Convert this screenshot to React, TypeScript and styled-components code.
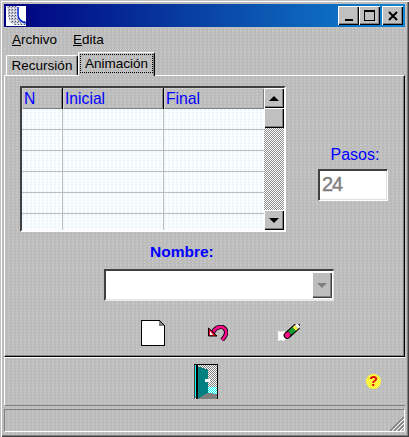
import React from 'react';
import styled, { createGlobalStyle, css } from 'styled-components'

const GlobalStyle = createGlobalStyle`
    html, body {
        margin: 0;
        padding: 0;
        background: #bdbdbd;
    }
`

const dots = css`
    background-color: #bbbbbb;
    background-image: radial-gradient(circle at 1px 1px, #c6c6c6 0.7px, transparent 0.8px);
    background-size: 4px 3px;
`

const Window = styled.div`
    ${dots}
    box-sizing: border-box;
    width: 409px;
    height: 437px;
    padding: 4px 4px 4px 4px;
    display: flex;
    flex-direction: column;
    overflow: hidden;
    font-family: "Liberation Sans", Arial, sans-serif;
    color: #000;
    box-shadow: inset 1px 1px 0 #c0c0c0, inset 2px 2px 0 #fff, inset -1px -1px 0 #404040, inset -2px -2px 0 #808080;
`

const TitleBar = styled.div`
    height: 23px;
    flex: none;
    padding: 0 2px;
    display: flex;
    align-items: center;
    background: linear-gradient(90deg, #000080 0%, #0a4aa8 55%, #1084d0 100%);
`

const TitleIcon = styled.svg`
    width: 20px;
    height: 20px;
    flex: none;
`

const TitleButtons = styled.div`
    margin-left: auto;
    display: flex;
    height: 19px;
`

const TitleButton = styled.div<{ $gap?: number }>`
    box-sizing: border-box;
    width: 21px;
    height: 19px;
    margin-left: ${p => p.$gap ?? 0}px;
    display: flex;
    align-items: center;
    justify-content: center;
    background: #c0c0c0;
    box-shadow: inset 1px 1px 0 #fff, inset -1px -1px 0 #000, inset -2px -2px 0 #808080;
`

const MenuBar = styled.div`
    height: 25px;
    flex: none;
    display: flex;
    align-items: center;
    gap: 16px;
    padding-left: 8px;
    font-size: 13.5px;
`

const TabStrip = styled.div`
    height: 23px;
    flex: none;
    display: flex;
    align-items: flex-end;
    padding-left: 2px;
    position: relative;
    z-index: 1;
    font-size: 13.5px;
`

const Tab = styled.div<{ $active?: boolean }>`
    box-sizing: border-box;
    display: flex;
    align-items: center;
    justify-content: center;
    height: ${p => (p.$active ? 24 : 20)}px;
    width: ${p => (p.$active ? 77 : 72)}px;
    margin-bottom: ${p => (p.$active ? -1 : 0)}px;
    padding-bottom: ${p => (p.$active ? 2 : 0)}px;
    border-top: 1px solid #fff;
    border-left: 1px solid #fff;
    border-right: 1px solid #000;
    border-radius: 2px 2px 0 0;
    ${dots}
    box-shadow: inset -1px 0 0 #808080;
`

const FocusLabel = styled.span`
    outline: 1px dotted #000;
    padding: 0 4px;
    line-height: 17px;
`

const Panel = styled.div`
    box-sizing: border-box;
    height: 282px;
    flex: none;
    padding: 10px 15px 0;
    display: flex;
    flex-direction: column;
    border-top: 1px solid #fff;
    border-left: 1px solid #fff;
    border-right: 1px solid #000;
    border-bottom: 1px solid #000;
    box-shadow: inset -1px -1px 0 #808080;
`

const TopRow = styled.div`
    display: flex;
    align-items: flex-start;
`

const GridFrame = styled.div`
    box-sizing: border-box;
    width: 266px;
    height: 146px;
    flex: none;
    display: flex;
    border-top: 2px solid #404040;
    border-left: 2px solid #404040;
    border-right: 2px solid #fff;
    border-bottom: 2px solid #fff;
`

const GridBody = styled.div`
    width: 242px;
    height: 142px;
    overflow: hidden;
    display: flex;
    flex-direction: column;
`

const HeaderRow = styled.div`
    display: grid;
    grid-template-columns: 41px 101px 100px;
    height: 21px;
    flex: none;
`

const HeaderCell = styled.div`
    box-sizing: border-box;
    padding-left: 2px;
    font-size: 15.7px;
    line-height: 21px;
    color: #0000ff;
    border-bottom: 1px solid #000;
    border-right: 1px solid #000;
    box-shadow: inset 1px 1px 0 #d0d0d0, inset -1px -1px 0 #808080;
    &:last-child {
        border-right: 0;
    }
`

const DataRow = styled.div`
    display: grid;
    grid-template-columns: 41px 101px 100px;
    height: 21px;
    flex: none;
`

const DataCell = styled.div`
    box-sizing: border-box;
    border-right: 1px solid #bdbdbd;
    border-bottom: 1px solid #bdbdbd;
    background-color: #fbfeff;
    background-image: radial-gradient(circle at 1px 1px, #eaf4fb 0.7px, transparent 0.8px);
    background-size: 4px 3px;
    &:last-child {
        border-right: 0;
    }
`

const ScrollBar = styled.div`
    width: 20px;
    height: 142px;
    flex: none;
    display: flex;
    flex-direction: column;
    background-color: #c8c8c8;
    background-image: repeating-conic-gradient(#8e8e8e 0 25%, #fff 0 50%);
    background-size: 2px 2px;
`

const ScrollButton = styled.div<{ $push?: boolean }>`
    box-sizing: border-box;
    width: 20px;
    height: 20px;
    flex: none;
    margin-top: ${p => (p.$push ? 'auto' : '0')};
    display: flex;
    align-items: center;
    justify-content: center;
    background: #c0c0c0;
    box-shadow: inset 1px 1px 0 #fff, inset -1px -1px 0 #000, inset -2px -2px 0 #808080;
`

const Arrow = styled.div<{ $down?: boolean; $color?: string }>`
    width: 0;
    height: 0;
    border-left: 5px solid transparent;
    border-right: 5px solid transparent;
    ${p => (p.$down
        ? `border-top: 5px solid ${p.$color ?? '#000'};`
        : `border-bottom: 5px solid ${p.$color ?? '#000'};`)}
`

const StepsColumn = styled.div`
    margin-left: 32px;
    margin-top: 59px;
    width: 70px;
    display: flex;
    flex-direction: column;
    align-items: center;
    gap: 5px;
`

const BlueLabel = styled.div`
    padding-left: 4px;
    font-size: 16px;
    line-height: 19px;
    color: #0000ff;
`

const StepsField = styled.div`
    box-sizing: border-box;
    width: 70px;
    height: 32px;
    padding-left: 3px;
    background: #fff;
    border: 1px solid #fff;
    border-top: 1px solid #404040;
    border-left: 1px solid #404040;
    box-shadow: inset 1px 1px 0 #404040, inset -1px -1px 0 #e0e0e0;
    color: #808080;
    font-size: 20px;
    letter-spacing: -1px;
    -webkit-text-stroke: 0.4px #808080;
    line-height: 29px;
`

const NameLabel = styled.div`
    margin: 11px 0 0 130px;
    font-size: 15.5px;
    font-weight: bold;
    line-height: 18px;
    color: #0000ff;
`

const Combo = styled.div`
    box-sizing: border-box;
    margin: 8px 0 0 84px;
    width: 230px;
    height: 32px;
    display: flex;
    justify-content: flex-end;
    align-items: center;
    padding-right: 1px;
    background: #fff;
    border-top: 2px solid #404040;
    border-left: 2px solid #404040;
    border-right: 1px solid #e8e8e8;
    border-bottom: 2px solid #e8e8e8;
`

const ComboButton = styled.div`
    box-sizing: border-box;
    width: 20px;
    height: 26px;
    display: flex;
    align-items: center;
    justify-content: center;
    background: #bdbdbd;
    box-shadow: inset 1px 1px 0 #fff, inset -1px -1px 0 #404040, inset -2px -2px 0 #808080;
`

const Toolbar = styled.div`
    margin: 18px 0 0 121px;
    display: flex;
    align-items: center;
    height: 28px;
`

const ToolIcon = styled.svg<{ $left: number }>`
    display: block;
    flex: none;
    margin-left: ${p => p.$left}px;
`

const Footer = styled.div`
    box-sizing: border-box;
    height: 49px;
    flex: none;
    display: flex;
    align-items: flex-start;
    padding: 6px 0 0 189px;
    border-top: 1px solid #fff;
    border-left: 1px solid #fff;
    border-bottom: 1px solid #808080;
`

const Door = styled.svg`
    display: block;
    flex: none;
`

const HelpBadge = styled.div`
    width: 15px;
    height: 15px;
    margin: 10px 0 0 148px;
    border-radius: 50%;
    flex: none;
    text-align: center;
    color: #e00000;
    font-size: 14px;
    font-weight: bold;
    line-height: 15px;
    background-color: #ffff00;
    background-image: repeating-conic-gradient(#fff070 0 25%, #ffff00 0 50%);
    background-size: 2px 2px;
`

const StatusBar = styled.div`
    box-sizing: border-box;
    margin: 3px 0 0 0;
    width: 401px;
    height: 23px;
    flex: none;
    display: flex;
    justify-content: flex-end;
    align-items: flex-end;
    border-top: 1px solid #808080;
    border-left: 1px solid #808080;
    border-bottom: 1px solid #fff;
    border-right: 1px solid #fff;
`

const Grip = styled.svg`
    display: block;
`

const rows = [0, 1, 2, 3, 4, 5]

function App() {
    return (
        <React.Fragment>
            <GlobalStyle />
            <Window>
                <TitleBar>
                    <TitleIcon viewBox="0 0 20 20" shapeRendering="crispEdges">
                        <defs>
                            <pattern id="noise" width="3" height="3" patternUnits="userSpaceOnUse">
                                <rect width="3" height="3" fill="#c8c8d8" />
                                <rect width="1" height="1" fill="#505068" />
                                <rect x="2" y="1" width="1" height="1" fill="#8888a0" />
                                <rect x="1" y="2" width="1" height="1" fill="#fff" />
                            </pattern>
                        </defs>
                        <rect width="20" height="20" fill="#fff" />
                        <path d="M1 0H11V10L14 14L20 16V19H7L3 14Z" fill="url(#noise)" />
                        <path d="M12 1V9Q12 15 20 17" fill="none" stroke="#1030d8" strokeWidth="1.6" shapeRendering="auto" />
                    </TitleIcon>
                    <TitleButtons>
                        <TitleButton>
                            <svg width="11" height="11" viewBox="0 0 11 11" shapeRendering="crispEdges">
                                <rect x="2" y="9" width="8" height="2" fill="#000" />
                            </svg>
                        </TitleButton>
                        <TitleButton>
                            <svg width="11" height="11" viewBox="0 0 11 11" shapeRendering="crispEdges">
                                <path d="M0 0H11V11H0ZM1 2V10H10V2Z" fill="#000" fillRule="evenodd" />
                            </svg>
                        </TitleButton>
                        <TitleButton $gap={2}>
                            <svg width="10" height="10" viewBox="0 0 10 10">
                                <path d="M1 1L9 9M9 1L1 9" stroke="#000" strokeWidth="2" />
                            </svg>
                        </TitleButton>
                    </TitleButtons>
                </TitleBar>

                <MenuBar>
                    <span><u>A</u>rchivo</span>
                    <span><u>E</u>dita</span>
                </MenuBar>

                <TabStrip>
                    <Tab>Recursión</Tab>
                    <Tab $active><FocusLabel>Animación</FocusLabel></Tab>
                </TabStrip>

                <Panel>
                    <TopRow>
                        <GridFrame>
                            <GridBody>
                                <HeaderRow>
                                    <HeaderCell>N</HeaderCell>
                                    <HeaderCell>Inicial</HeaderCell>
                                    <HeaderCell>Final</HeaderCell>
                                </HeaderRow>
                                {rows.map(r => (
                                    <DataRow key={r}>
                                        <DataCell />
                                        <DataCell />
                                        <DataCell />
                                    </DataRow>
                                ))}
                            </GridBody>
                            <ScrollBar>
                                <ScrollButton><Arrow /></ScrollButton>
                                <ScrollButton />
                                <ScrollButton $push><Arrow $down /></ScrollButton>
                            </ScrollBar>
                        </GridFrame>
                        <StepsColumn>
                            <BlueLabel>Pasos:</BlueLabel>
                            <StepsField>24</StepsField>
                        </StepsColumn>
                    </TopRow>

                    <NameLabel>Nombre:</NameLabel>
                    <Combo>
                        <ComboButton><Arrow $down $color="#808080" /></ComboButton>
                    </Combo>

                    <Toolbar>
                        <ToolIcon $left={0} width="24" height="26" viewBox="0 0 24 26" shapeRendering="crispEdges">
                            <path d="M0.5 0.5H18L23.5 6V25.5H0.5Z" fill="#fff" stroke="#000" />
                            <path d="M18 1L23 6H18Z" fill="#808080" />
                        </ToolIcon>
                        <ToolIcon $left={43} width="20" height="16" viewBox="0 0 20 16">
                            <path d="M5 7C8 2 14 0 17 4C20 8 17 12 14 15" fill="none" stroke="#000" strokeWidth="4.4" />
                            <path d="M5 7C8 2 14 0 17 4C20 8 17 12 14 15" fill="none" stroke="#ff0a8c" strokeWidth="2.6" />
                            <path d="M0.500 3L0.500 11L9 11Z" fill="#f00020" stroke="#000" />
                            <path d="M2 6V10H5Z" fill="#fff" />
                        </ToolIcon>
                        <ToolIcon $left={50} width="22" height="18" viewBox="0 0 22 18">
                            <path d="M0 7L3 8L6 7L8 9L9 14L6 17L3 16L0 17Z" fill="#fff" />
                            <g transform="rotate(-42 14 7)">
                                <rect x="4" y="3.500" width="20" height="7" rx="3.500" fill="#000" />
                                <rect x="5" y="4.500" width="6" height="5" rx="2.500" fill="#ff0a8c" />
                                <rect x="11" y="4.500" width="6" height="5" fill="#10a030" />
                                <rect x="17" y="4.500" width="3" height="5" fill="#f8f840" />
                                <rect x="20" y="4.500" width="3" height="5" fill="#fff" />
                            </g>
                        </ToolIcon>
                    </Toolbar>
                </Panel>

                <Footer>
                    <Door width="24" height="35" viewBox="0 0 24 35" shapeRendering="crispEdges">
                        <defs>
                            <pattern id="wall" width="2" height="2" patternUnits="userSpaceOnUse">
                                <rect width="2" height="2" fill="#fff" />
                                <rect width="1" height="1" fill="#808080" />
                                <rect x="1" y="1" width="1" height="1" fill="#808080" />
                            </pattern>
                            <pattern id="light" width="2" height="2" patternUnits="userSpaceOnUse">
                                <rect width="2" height="2" fill="#fff" />
                                <rect width="1" height="1" fill="#00ffff" />
                                <rect x="1" y="1" width="1" height="1" fill="#00ffff" />
                            </pattern>
                        </defs>
                        <rect width="24" height="35" fill="url(#wall)" />
                        <rect x="13" y="23" width="11" height="7" fill="url(#light)" />
                        <path d="M1 35L13 29L24 30V35Z" fill="#808080" />
                        <path d="M3 2L14 6V29L3 35Z" fill="#008080" />
                        <rect x="1" y="1" width="1" height="32" fill="#00ffff" />
                        <rect x="0" y="0" width="1" height="35" fill="#404040" />
                        <rect x="2" y="1" width="2" height="34" fill="#000" />
                        <rect x="0" y="0" width="24" height="1" fill="#000" />
                        <rect x="23" y="0" width="1" height="35" fill="#000" />
                        <rect x="11" y="15" width="5" height="3" fill="#fff" />
                    </Door>
                    <HelpBadge>?</HelpBadge>
                </Footer>

                <StatusBar>
                    <Grip width="15" height="15" viewBox="0 0 15 15">
                        <path d="M15 1L1 15M15 5L5 15M15 9L9 15" stroke="#808080" strokeWidth="1.500" />
                        <path d="M15 3L3 15M15 7L7 15M15 11L11 15" stroke="#fff" strokeWidth="1" />
                    </Grip>
                </StatusBar>
            </Window>
        </React.Fragment>
    );
}

export default App;
